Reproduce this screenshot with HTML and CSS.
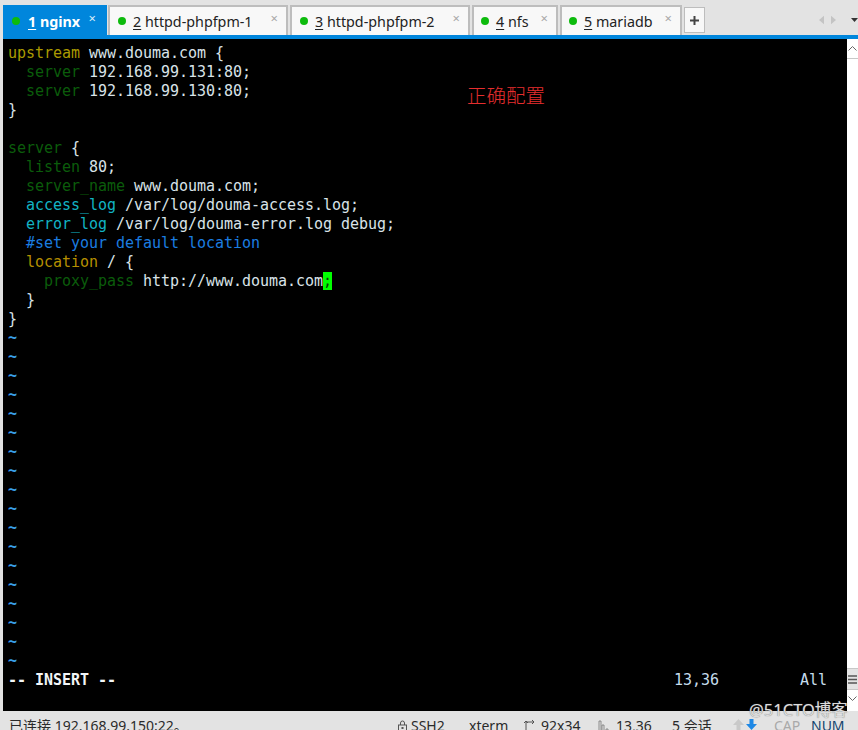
FILE: index.html
```html
<!DOCTYPE html>
<html lang="zh-CN">
<head>
<meta charset="utf-8">
<title>Xshell</title>
<link rel="stylesheet" href="styles.css">
</head>
<body>
<div class="app">
  <header class="tabbar">
    <div class="tab active w1"><i class="dot"></i><span class="label"><u>1</u> nginx</span><span class="close">×</span></div>
    <div class="tab w2"><i class="dot"></i><span class="label"><u>2</u> httpd-phpfpm-1</span><span class="close">×</span></div>
    <div class="tab w2"><i class="dot"></i><span class="label"><u>3</u> httpd-phpfpm-2</span><span class="close">×</span></div>
    <div class="tab w4"><i class="dot"></i><span class="label"><u>4</u> nfs</span><span class="close">×</span></div>
    <div class="tab w5"><i class="dot"></i><span class="label"><u>5</u> mariadb</span><span class="close">×</span></div>
    <div class="add"><svg width="11" height="11" viewBox="0 0 11 11"><path d="M5.5 1v9M1 5.500h9" stroke="#444" stroke-width="2"/></svg></div>
    <div class="tabnav">
      <svg width="6" height="10" viewBox="0 0 6 10"><path d="M6 0v10L0 5z" fill="#c4c4c4"/></svg>
      <svg width="6" height="10" viewBox="0 0 6 10"><path d="M0 0v10l6-5z" fill="#c4c4c4"/></svg>
      <svg class="menu" width="7" height="4" viewBox="0 0 7 4"><path d="M0 0h7L3.500 4z" fill="#333"/></svg>
    </div>
  </header>
  <div class="rule"></div>
  <main class="workspace">
    <div class="terminal">
      <div class="ln"><span class="y">upstream</span> www.douma.com {</div>
      <div class="ln">  <span class="g">server</span> 192.168.99.131:80;</div>
      <div class="ln">  <span class="g">server</span> 192.168.99.130:80;</div>
      <div class="ln">}</div>
      <div class="ln"> </div>
      <div class="ln"><span class="g">server</span> {</div>
      <div class="ln">  <span class="g">listen</span> 80;</div>
      <div class="ln">  <span class="g">server_name</span> www.douma.com;</div>
      <div class="ln">  <span class="c">access_log</span> /var/log/douma-access.log;</div>
      <div class="ln">  <span class="c">error_log</span> /var/log/douma-error.log debug;</div>
      <div class="ln">  <span class="b">#set your default location</span></div>
      <div class="ln">  <span class="o">location</span> / {</div>
      <div class="ln">    <span class="g">proxy_pass</span> http://www.douma.com<span class="cursor">;</span></div>
      <div class="ln">  }</div>
      <div class="ln">}</div>
      <div class="ln t">~</div><div class="ln t">~</div><div class="ln t">~</div>
      <div class="ln t">~</div><div class="ln t">~</div><div class="ln t">~</div>
      <div class="ln t">~</div><div class="ln t">~</div><div class="ln t">~</div>
      <div class="ln t">~</div><div class="ln t">~</div><div class="ln t">~</div>
      <div class="ln t">~</div><div class="ln t">~</div><div class="ln t">~</div>
      <div class="ln t">~</div><div class="ln t">~</div><div class="ln t">~</div>
      <div class="ln last"><strong>-- INSERT --</strong><span class="pos">13,36</span><span class="all">All</span></div>
      <div class="note">正确配置</div>
    </div>
    <aside class="scrollbar">
      <div class="sb-btn up"><svg width="9" height="5" viewBox="0 0 9 5"><path d="M.5 4.500l4-4 4 4" fill="none" stroke="#666"/></svg></div>
      <div class="track">
        <div class="thumb"><svg width="9" height="9" viewBox="0 0 9 9"><path d="M0 1h9M0 4.500h9M0 8h9" stroke="#555" stroke-width="1.400"/></svg></div>
      </div>
      <div class="sb-btn down"><svg width="9" height="5" viewBox="0 0 9 5"><path d="M.5.5l4 4 4-4" fill="none" stroke="#666"/></svg></div>
    </aside>
  </main>
  <footer class="status">
    <span class="s-conn">已连接 192.168.99.150:22。</span>
    <span class="s-ssh"><svg width="9" height="12" viewBox="0 0 9 12"><path d="M2.500 5V3a2 2 0 0 1 4 0v2" fill="none" stroke="#555"/><rect x=".5" y="5" width="8" height="6.500" fill="none" stroke="#555"/><rect x="3.500" y="7" width="2" height="2" fill="#555"/></svg>SSH2</span>
    <span class="s-term">xterm</span>
    <span class="s-size"><svg width="11" height="12" viewBox="0 0 11 12"><path d="M3 12V2h7M1 3l2-2 2 2M9 0l2 2-2 2" fill="none" stroke="#555"/></svg>92x34</span>
    <span class="s-pos"><svg width="11" height="12" viewBox="0 0 11 12"><path d="M1 1h2v10H1zM4 5h2v6H4zM8 9h2v2H8z" fill="none" stroke="#777" stroke-width=".8"/></svg>13,36</span>
    <span class="s-sess">5 会话</span>
    <span class="s-up"><svg width="11" height="11" viewBox="0 0 11 11"><path d="M5.500 0L11 6H7.500v5h-4V6H0z" fill="#c9c9c9"/></svg></span>
    <span class="s-down"><svg width="11" height="11" viewBox="0 0 11 11"><path d="M5.500 11L0 5h3.500V0h4v5H11z" fill="#1e88e5"/></svg></span>
    <span class="s-cap">CAP</span>
    <span class="s-num">NUM</span>
  </footer>
  <div class="watermark">@51CTO博客</div>
</div>
</body>
</html>
```
FILE: styles.css
```css
* { box-sizing: border-box; }
html, body { margin: 0; padding: 0; }
body { width: 858px; height: 730px; overflow: hidden; background: #e3e3e3; }
.app {
  position: relative;
  width: 858px;
  height: 730px;
  overflow: hidden;
  display: flex;
  flex-direction: column;
  font-family: "Noto Sans", "Noto Sans CJK SC", sans-serif;
  color: #222;
}

/* tabs */
.tabbar {
  height: 35px;
  flex: none;
  display: flex;
  align-items: flex-end;
  padding-left: 3px;
  gap: 2px;
}
.tab {
  position: relative;
  height: 30px;
  background: #f8f8f8;
  border: 2px solid #bdbdbd;
  border-bottom: 0;
  display: flex;
  align-items: center;
  font-size: 14.300px;
  padding: 0 0 0 8px;
}
.tab.active {
  background: #0086dc;
  border-color: #0086dc;
  color: #fff;
  font-weight: 700;
  margin-right: -1px;
  padding-left: 7px;
}
.w1 { width: 104px; }
.w2 { width: 180px; }
.tab.w4 { width: 86px; padding-left: 7px; }
.tab.w5 { width: 122px; padding-left: 7px; }
.dot {
  width: 8px;
  height: 8px;
  border-radius: 50%;
  background: #0dbb0d;
  flex: none;
  margin-right: 7px;
}
.active .dot { margin-right: 8px; }
.label { white-space: pre; }
.label u { text-underline-offset: 2px; }
.close {
  position: absolute;
  right: 8px;
  top: 3px;
  font-size: 13px;
  line-height: 16px;
  color: #a8a8a8;
  font-weight: 400;
}
.active .close { color: #d7ecfa; right: 9px; }
.add {
  width: 21px;
  height: 26px;
  margin-bottom: 2px;
  background: #f8f8f8;
  border: 1px solid #bdbdbd;
  display: flex;
  align-items: center;
  justify-content: center;
}
.tabnav {
  margin-left: auto;
  align-self: center;
  margin-top: 5px;
  display: flex;
  align-items: center;
  gap: 7px;
  width: 39px;
}
.tabnav .menu { margin-left: 8px; flex: none; }
.rule { height: 4px; flex: none; background: #0086dc; margin-left: 3px; }

/* terminal */
.workspace {
  height: 672px;
  flex: none;
  display: flex;
  padding-left: 3px;
}
.terminal {
  position: relative;
  flex: 1;
  background: #000;
  padding: 5px 0 0 5px;
  font-family: "DejaVu Sans Mono", monospace;
  font-size: 15px;
  color: #d9e3e8;
}
.ln { height: 19px; line-height: 19px; letter-spacing: -0.03px; white-space: pre; }
.y { color: #ab9a00; }
.g { color: #0b5c0b; }
.c { color: #12b4c4; }
.b { color: #1b7de0; }
.o { color: #b58f00; }
.t { color: #3aa0ea; font-weight: 700; }
.cursor { background: #00ff00; color: #0b3b0b; }
.last { position: relative; }
.last strong { color: #f2f5f7; }
.pos { position: absolute; left: 666px; color: #c5dcec; }
.all { position: absolute; left: 792px; color: #c5dcec; }
.note {
  position: absolute;
  left: 464px;
  top: 43px;
  font-family: "Noto Sans CJK SC", sans-serif;
  font-size: 19.500px;
  line-height: 26px;
  font-weight: 300;
  color: #e62e2e;
}

/* scrollbar */
.scrollbar {
  width: 11px;
  flex: none;
  display: flex;
  flex-direction: column;
  background: #fff;
}
.sb-btn {
  height: 20px;
  flex: none;
  display: flex;
  align-items: center;
  justify-content: center;
  background: #fff;
}
.sb-btn.up { border-bottom: 1px solid #c8c8c8; }
.sb-btn.down { height: 21px; padding-bottom: 4px; }
.track { flex: 1; display: flex; align-items: flex-end; }
.thumb {
  width: 100%;
  height: 22px;
  background: #e3e3e3;
  border-top: 1px solid #c8c8c8;
  border-bottom: 1px solid #c8c8c8;
  display: flex;
  align-items: center;
  justify-content: center;
}

/* status bar */
.status {
  height: 19px;
  flex: none;
  display: flex;
  align-items: flex-start;
  font-size: 14px;
  line-height: 29px;
  padding-left: 9px;
  white-space: nowrap;
  color: #2a2a2a;
}
.status span { display: inline-flex; align-items: center; flex: none; }
.status svg { flex: none; }
.s-conn { width: 389px; }
.s-ssh { width: 71px; }
.s-ssh svg { margin-right: 4px; }
.s-term { width: 54px; }
.s-size { width: 75px; }
.s-size svg { margin-right: 7px; }
.s-pos { width: 74px; }
.s-pos svg { margin-right: 7px; }
.s-sess { width: 61px; }
.status .s-up { width: 13px; margin-top: 8px; }
.status .s-down { width: 28px; margin-top: 8px; }
.s-cap { width: 37px; color: #a9a9a9; }
.s-num { color: #14456f; }
.watermark {
  position: absolute;
  left: 749px;
  top: 699px;
  font-size: 16.500px;
  line-height: 22px;
  color: #dcdcdc;
  text-shadow: 0 0 1px #666;
}
```
